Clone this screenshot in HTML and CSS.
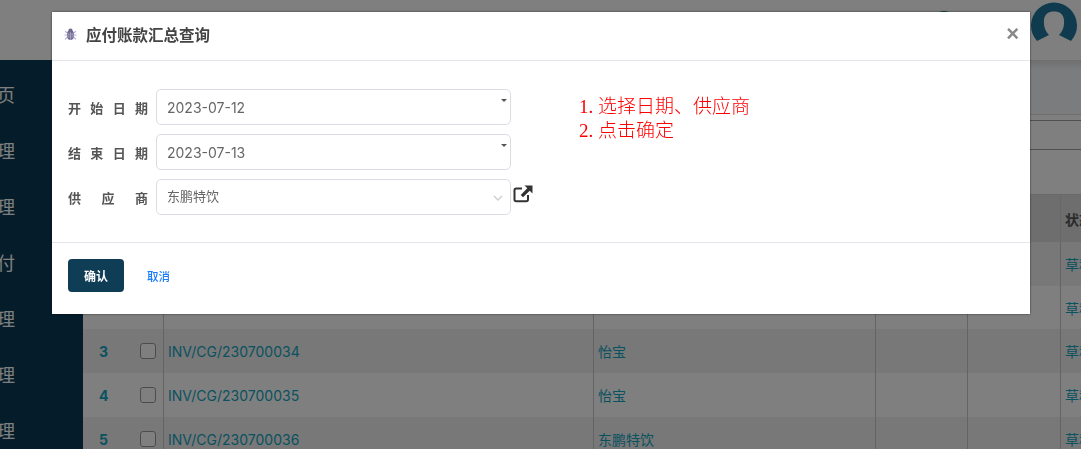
FILE: index.html
```html
<!DOCTYPE html>
<html>
<head>
    <meta charset="UTF-8">
    <title>应付账款汇总查询</title>
    <link rel="stylesheet" href="styles.css">
</head>
<body>
    <div class="page">
        <aside class="sidebar">
            <div class="menu-item">首页</div>
            <div class="menu-item">采购管理</div>
            <div class="menu-item">销售管理</div>
            <div class="menu-item">应付</div>
            <div class="menu-item">库存管理</div>
            <div class="menu-item">财务管理</div>
            <div class="menu-item">系统管理</div>
        </aside>
        <div class="main">
            <header class="topbar">
                <span class="bell"></span>
                <svg class="avatar" viewBox="0 0 46 46" width="46" height="46">
                    <path d="M6 39A23 23 0 1 1 40 39C36 37 32 35 28 33C32 29 33.500 24 33 18C32.500 12 28.500 9.500 23 9.500C17.500 9.500 13.500 12 13 18C12.500 24 14 29 18 33C14 35 10 37 6 39Z"/>
                </svg>
            </header>
            <div class="toolbar">
                <div class="toolbar-head"></div>
                <div class="toolbar-row one"></div>
                <div class="toolbar-row two"></div>
            </div>
            <table class="grid">
                <tr class="head"><th class="c-no"></th><th class="c-check"></th><th class="c-inv"></th><th class="c-sup"></th><th class="c-a"></th><th class="c-b"></th><th class="c-state">状态</th></tr>
                <tr><td class="no"></td><td class="check"></td><td></td><td></td><td></td><td></td><td>草稿</td></tr>
                <tr class="even short"><td class="no"></td><td class="check"></td><td></td><td></td><td></td><td></td><td>草稿</td></tr>
                <tr><td class="no">3</td><td class="check"><span class="box"></span></td><td>INV/CG/230700034</td><td>怡宝</td><td></td><td></td><td>草稿</td></tr>
                <tr class="even"><td class="no">4</td><td class="check"><span class="box"></span></td><td>INV/CG/230700035</td><td>怡宝</td><td></td><td></td><td>草稿</td></tr>
                <tr><td class="no">5</td><td class="check"><span class="box"></span></td><td>INV/CG/230700036</td><td>东鹏特饮</td><td></td><td></td><td>草稿</td></tr>
            </table>
        </div>
    </div>

    <div class="backdrop"></div>

    <div class="modal">
        <div class="modal-header">
            <svg class="bug" viewBox="0 0 12 12" width="13" height="13">
                <path class="bug-legs" d="M1 3L3 4.500M11 3L9 4.500M0.500 6.500H3M11.500 6.500H9M1 10.500L3 8.500M11 10.500L9 8.500"/>
                <path class="bug-body" d="M4 2.500A2 2 0 0 1 8 2.500L9 4V8.500C9 10 7.500 11 6 11C4.500 11 3 10 3 8.500V4Z"/>
                <path class="bug-line" d="M6 4V11M4.500 4.500V9M7.500 4.500V9"/>
            </svg>
            <h4 class="modal-title">应付账款汇总查询</h4>
            <span class="close">×</span>
        </div>
        <div class="modal-body">
            <div class="form">
                <div class="field">
                    <label class="label">开始日期</label>
                    <div class="input">2023-07-12<span class="caret"></span></div>
                </div>
                <div class="field">
                    <label class="label">结束日期</label>
                    <div class="input">2023-07-13<span class="caret"></span></div>
                </div>
                <div class="field">
                    <label class="label">供应商</label>
                    <div class="input select">东鹏特饮
                        <svg class="chevron" viewBox="0 0 10 6" width="10" height="6"><path d="M1 1L5 5L9 1"/></svg>
                    </div>
                    <svg class="open-link" viewBox="0 0 20 18" width="20" height="18">
                        <path d="M15 10V14.500C15 15.500 14.300 16.200 13.300 16.200H3.200C2.200 16.200 1.500 15.500 1.500 14.500V5.200C1.500 4.200 2.200 3.500 3.200 3.500H9" class="link-box"/>
                        <path d="M11.500 0.500H19.500V8.500L16.700 5.700L10 12.300L7.700 10L14.300 3.300Z"/>
                    </svg>
                </div>
            </div>
            <div class="help">
                <div>1. 选择日期、供应商</div>
                <div>2. 点击确定</div>
            </div>
        </div>
        <div class="modal-footer">
            <button class="btn">确认</button>
            <a class="cancel">取消</a>
        </div>
    </div>
</body>
</html>
```

FILE: styles.css
```css
html, body {
    margin: 0;
    height: 100%;
    overflow: hidden;
}
body {
    font-family: Inter, "Noto Sans CJK SC", sans-serif;
    font-size: 14px;
    color: #333;
    background: #fff;
}
.page {
    display: flex;
    height: 449px;
    overflow: hidden;
}
.sidebar {
    flex: 0 0 83px;
    background: #0a3955;
    margin-top: 60px;
    padding-top: 7px;
    overflow: hidden;
}
.menu-item {
    height: 56px;
    line-height: 58px;
    font-size: 18px;
    color: #fff;
    white-space: nowrap;
    direction: rtl;
    text-align: left;
    width: 15px;
}
.main {
    flex: 1;
    min-width: 0;
}
.topbar {
    height: 60px;
    margin-left: -83px;
    display: flex;
    justify-content: flex-end;
    align-items: flex-start;
    padding: 2px 4px 0 0;
    box-sizing: border-box;
}
.avatar {
    fill: #20769c;
}
.bell {
    width: 24px;
    height: 24px;
    border-radius: 50%;
    background: #1b8296;
    margin: 9px 75px 0 0;
}
.toolbar {
    height: 134px;
}
.toolbar-head {
    height: 54px;
    background: linear-gradient(#dedede, #f6f9fc 10px);
    border-bottom: 1px solid #ddd;
}
.toolbar-row {
    border-bottom: 1px solid #a0a0a0;
}
.toolbar-row.one {
    height: 5px;
}
.toolbar-row.two {
    height: 28px;
}
.grid {
    width: 998px;
    table-layout: fixed;
    border-collapse: separate;
    border-spacing: 0;
    border-top: 1px solid #d4d4d4;
}
.grid th {
    height: 47px;
    padding: 0 0 0 4px;
    text-align: left;
    font-size: 14px;
    background: #dcdcdc;
    color: #555;
    border-left: 1px solid #d0d0d0;
    white-space: nowrap;
    overflow: hidden;
    box-sizing: border-box;
}
.grid td {
    height: 44px;
    padding: 0 0 0 4px;
    background: #f0f0f0;
    color: #13a4c0;
    font-size: 14px;
    border-left: 1px solid #c8c8c8;
    white-space: nowrap;
    overflow: hidden;
    box-sizing: border-box;
}
.grid .even td {
    background: #fff;
}
.grid .short td {
    height: 43px;
}
.grid th:first-child,
.grid th:nth-child(2),
.grid td:first-child,
.grid td.check {
    border-left: 0;
}
.c-no { width: 50px; }
.c-check { width: 30px; }
.c-inv { width: 430px; }
.c-sup { width: 282px; }
.c-a { width: 92px; }
.c-b { width: 93px; }
.c-state { width: 21px; }
.grid td.no {
    padding-left: 16px;
    font-weight: bold;
}
.grid td.check {
    padding-left: 7px;
}
.box {
    display: block;
    width: 16px;
    height: 16px;
    box-sizing: border-box;
    border: 1px solid #999;
    border-radius: 3px;
    background: #fff;
}
.backdrop {
    position: fixed;
    inset: 0;
    background: rgba(0, 0, 0, 0.5);
}
.modal {
    position: absolute;
    left: 52px;
    top: 12px;
    width: 978px;
    height: 302px;
    background: #fff;
    box-shadow: 0 0 2px rgba(0, 0, 0, 0.6);
}
.modal-header {
    display: flex;
    align-items: center;
    height: 44px;
    padding: 0 12px 4px 12px;
    border-bottom: 1px solid #e4e4ea;
}
.bug {
    margin-right: 9px;
}
.bug-legs {
    stroke: #b4aee0;
    stroke-width: 1;
    fill: none;
}
.bug-body {
    fill: #6f688f;
}
.bug-line {
    stroke: #c9c5dc;
    stroke-width: 0.6;
    fill: none;
}
.modal-title {
    margin: 0;
    font-size: 15.500px;
    font-weight: bold;
    color: #444;
}
.close {
    margin-left: auto;
    margin-right: -1px;
    font-family: "Liberation Sans", sans-serif;
    font-size: 22px;
    font-weight: bold;
    color: #888;
    line-height: 1;
}
.modal-body {
    display: flex;
    height: 182px;
    padding: 28px 0 0 16px;
    box-sizing: border-box;
    border-bottom: 1px solid #e4e4ea;
}
.form {
    width: 511px;
}
.field {
    display: flex;
    align-items: flex-start;
    margin-bottom: 9px;
}
.label {
    width: 80px;
    height: 36px;
    margin-right: 8px;
    line-height: 38px;
    font-size: 13px;
    font-weight: bold;
    color: #555;
    text-align-last: justify;
}
.input {
    position: relative;
    width: 355px;
    height: 36px;
    line-height: 35px;
    padding-left: 10px;
    box-sizing: border-box;
    border: 1px solid #dcdce4;
    border-radius: 5px;
    font-size: 14px;
    color: #666;
}
.input.select {
    font-size: 13px;
    line-height: 33px;
}
.caret {
    position: absolute;
    right: 3px;
    top: 9px;
    border: 3px solid transparent;
    border-top-color: #555;
}
.chevron {
    position: absolute;
    right: 7px;
    top: 15px;
    fill: none;
    stroke: #ccc;
    stroke-width: 1.300;
}
.open-link {
    margin: 6px 0 0 2px;
    fill: #333;
}
.open-link .link-box {
    fill: none;
    stroke: #333;
    stroke-width: 2;
}
.help {
    margin-top: 6px;
    font-family: "Liberation Serif", "Noto Sans CJK SC", serif;
    font-size: 19px;
    font-weight: 300;
    line-height: 24px;
    color: #f00;
}
.modal-footer {
    display: flex;
    align-items: center;
    height: 65px;
    padding: 0 16px;
}
.btn {
    width: 56px;
    height: 33px;
    border: 0;
    border-radius: 4px;
    background: #0f3d56;
    color: #fff;
    font: bold 12px Inter, "Noto Sans CJK SC", sans-serif;
}
.cancel {
    margin-left: 23px;
    font-size: 11.500px;
    font-weight: 500;
    color: #1a7cfb;
}
```
